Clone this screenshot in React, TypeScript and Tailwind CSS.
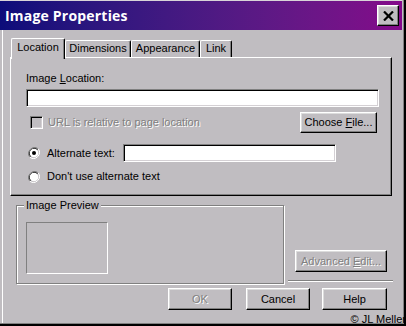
import React from "react";

const raised =
  "border border-t-white border-l-white border-r-black border-b-black shadow-[inset_-1px_-1px_0_#808080,inset_1px_1px_0_#dcdcdc] bg-[#c0bdc1]";
const sunken =
  "border border-t-[#808080] border-l-[#808080] border-b-white border-r-white shadow-[inset_1px_1px_0_#000,inset_-1px_-1px_0_#d4d0d4]";
const disabledText = "text-[#808080] [text-shadow:1px_1px_0_#fff]";

function Radio({ checked }: { checked?: boolean }) {
  return (
    <svg width="12" height="12" viewBox="0 0 12 12" className="shrink-0">
      <path d="M10.2 1.8 A6 6 0 0 0 1.8 10.2" stroke="#808080" strokeWidth="1" fill="none" />
      <path d="M9.5 2.5 A5 5 0 0 0 2.5 9.5" stroke="#000" strokeWidth="1" fill="none" />
      <circle cx="6" cy="6" r="4.3" fill="#fff" />
      <path d="M1.8 10.2 A6 6 0 0 0 10.2 1.8" stroke="#fff" strokeWidth="1" fill="none" />
      {checked && <circle cx="6" cy="6" r="2" fill="#000" />}
    </svg>
  );
}

function Tab({ label, selected, w }: { label: string; selected?: boolean; w: string }) {
  if (selected) {
    return (
      <div
        className={`${w} h-[21px] mb-[-2px] relative z-10 bg-[#c0bdc1] border-t border-l border-t-white border-l-white border-r border-r-black rounded-t-[2px] shadow-[inset_-1px_0_0_#808080] flex items-start justify-center pt-[2px]`}
      >
        {label}
      </div>
    );
  }
  return (
    <div
      className={`${w} h-[17px] bg-[#c0bdc1] border-t border-l border-t-white border-l-white border-r border-r-black rounded-t-[2px] shadow-[inset_-1px_0_0_#808080] flex items-start justify-center pt-[1px]`}
    >
      {label}
    </div>
  );
}

export default function App() {
  return (
    <div
      className="relative w-[406px] h-[326px] overflow-hidden bg-[#c0bdc1] text-[11px] leading-[13px] text-black shadow-[inset_-2px_-2px_0_#000,inset_-3px_-3px_0_#808080,inset_2px_0_0_#c0bdc1,inset_3px_0_0_#fff]"
      style={{ fontFamily: '"Liberation Sans", Arial, sans-serif' }}
    >
      {/* title bar */}
      <div className="border-t border-[#d8d4d8] mr-[4px]">
        <div className="h-[29px] bg-linear-to-r from-[#0c0c7a] to-[#84088a] flex items-center justify-between pl-[5px] pr-[3px]">
          <span
            className="text-white font-bold text-[14px] leading-[16px] mt-[1px] tracking-[0.2px]"
            style={{ fontFamily: '"Open Sans", "DejaVu Sans", sans-serif' }}
          >
            Image Properties
          </span>
          <div className={`w-[22px] h-[21px] ${raised} flex items-center justify-center`}>
            <svg width="11" height="10" viewBox="0 0 11 10">
              <path d="M1 0.5 L10 9.5 M10 0.5 L1 9.5" stroke="#000" strokeWidth="2.2" />
            </svg>
          </div>
        </div>
      </div>

      {/* tabs */}
      <div className="mt-[8px] ml-[11px] flex items-end">
        <Tab label="Location" selected w="w-[54px]" />
        <Tab label="Dimensions" w="w-[66px]" />
        <Tab label="Appearance" w="w-[69px]" />
        <Tab label="Link" w="w-[32px]" />
      </div>

      {/* tab panel */}
      <div className="ml-[10px] w-[382px] h-[139px] border border-t-white border-l-white border-r-black border-b-black shadow-[inset_-1px_-1px_0_#808080] pl-[15px] pt-[14px]">
        <div>
          Image <span className="underline">L</span>ocation:
        </div>
        <div className={`mt-[4px] w-[353px] h-[18px] bg-white ${sunken}`} />

        <div className="mt-[5px] w-[351px] h-[21px] flex items-center justify-between">
          <div className="flex items-center ml-[4px]">
            <div className={`w-[13px] h-[13px] ${sunken}`} />
            <span className={`ml-[5px] ${disabledText}`}>URL is relative to page location</span>
          </div>
          <div className={`w-[77px] h-[21px] ${raised} flex items-center justify-center`}>
            <span>
              Choose <span className="underline">F</span>ile...
            </span>
          </div>
        </div>

        <div className="mt-[11px] h-[18px] flex items-center">
          <div className="ml-[2px]">
            <Radio checked />
          </div>
          <span className="ml-[7px] w-[76px]">Alternate text:</span>
          <div className={`w-[213px] h-[18px] bg-white ${sunken}`} />
        </div>

        <div className="mt-[8px] h-[13px] flex items-center">
          <div className="ml-[2px]">
            <Radio />
          </div>
          <span className="ml-[7px]">Don't use alternate text</span>
        </div>
      </div>

      {/* lower section */}
      <div className="flex items-start">
        <fieldset className="ml-[16px] mt-[3px] w-[268px] h-[85px] border border-[#808080] shadow-[1px_1px_0_#fff,inset_1px_1px_0_#fff]">
          <legend className="ml-[7px] px-[2px] bg-[#c0bdc1] leading-[13px]">Image Preview</legend>
          <div className="ml-[9px] mt-[10px] w-[82px] h-[52px] border border-t-[#808080] border-l-[#808080] border-b-white border-r-white" />
        </fieldset>
        <div className="ml-[4px] w-[105px] flex flex-col">
          <div className={`ml-[7px] mt-[54px] w-[92px] h-[22px] ${raised} flex items-center justify-center ${disabledText}`}>
            <span>
              Advanced <span className="underline">E</span>dit...
            </span>
          </div>
          <div className="mt-[8px] h-[2px] border-t border-t-[#808080] border-b border-b-white" />
        </div>
      </div>

      {/* buttons */}
      <div className="mt-[4px] flex">
        <div className={`ml-[168px] w-[64px] h-[22px] ${raised} flex items-center justify-center ${disabledText}`}>OK</div>
        <div className={`ml-[14px] w-[64px] h-[22px] ${raised} flex items-center justify-center`}>Cancel</div>
        <div className={`ml-[12px] w-[65px] h-[22px] ${raised} flex items-center justify-center`}>Help</div>
      </div>

      <div className="absolute right-0 bottom-[1px] text-[11px] leading-[11px] text-black">© JL Meller</div>
    </div>
  );
}
